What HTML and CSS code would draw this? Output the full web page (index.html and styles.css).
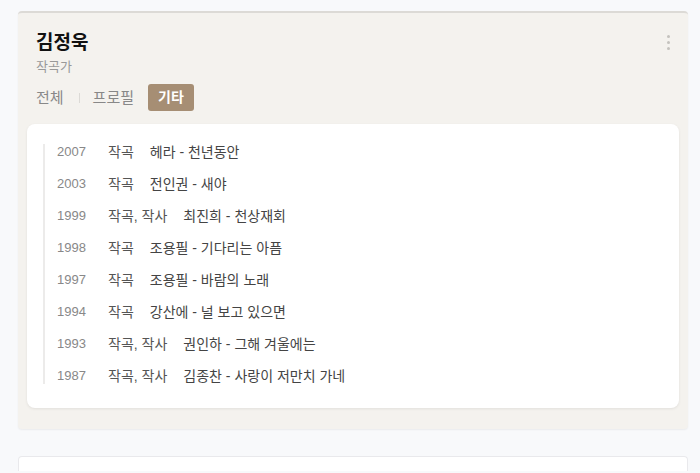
FILE: index.html
```html
<!DOCTYPE html>
<html lang="ko">
<head>
<meta charset="utf-8">
<link rel="stylesheet" href="styles.css">
</head>
<body>
<div class="page">
  <section class="card">
    <div class="head">
      <div class="info">
        <h1 class="name">김정욱</h1>
        <div class="job">작곡가</div>
      </div>
      <div class="more"><span></span><span></span><span></span></div>
    </div>
    <nav class="tabs">
      <span class="tab">전체</span>
      <span class="sep"></span>
      <span class="tab">프로필</span>
      <span class="tab active">기타</span>
    </nav>
    <div class="panel">
      <ul class="list">
        <li><span class="year">2007</span><span class="role">작곡</span><span class="song">헤라 - 천년동안</span></li>
        <li><span class="year">2003</span><span class="role">작곡</span><span class="song">전인권 - 새야</span></li>
        <li><span class="year">1999</span><span class="role">작곡, 작사</span><span class="song">최진희 - 천상재회</span></li>
        <li><span class="year">1998</span><span class="role">작곡</span><span class="song">조용필 - 기다리는 아픔</span></li>
        <li><span class="year">1997</span><span class="role">작곡</span><span class="song">조용필 - 바람의 노래</span></li>
        <li><span class="year">1994</span><span class="role">작곡</span><span class="song">강산에 - 널 보고 있으면</span></li>
        <li><span class="year">1993</span><span class="role">작곡, 작사</span><span class="song">권인하 - 그해 겨울에는</span></li>
        <li><span class="year">1987</span><span class="role">작곡, 작사</span><span class="song">김종찬 - 사랑이 저만치 가네</span></li>
      </ul>
    </div>
  </section>
  <section class="card2"></section>
</div>
</body>
</html>
```
FILE: styles.css
```css
html, body {
  margin: 0;
  padding: 0;
  background: #f8f9fb;
  font-family: "Liberation Sans", "Noto Sans CJK KR", sans-serif;
}
.page {
  width: 670px;
  padding: 11px 0 0 18px;
}
.card {
  background: #f4f2ee;
  border-top: 2px solid #dcdad6;
  border-radius: 4px;
  padding: 18px 9px 21px 9px;
  box-shadow: 0 1px 2px rgba(0,0,0,0.06);
}
.head {
  display: flex;
  justify-content: space-between;
  align-items: flex-start;
  padding: 0 9px;
}
.name {
  margin: 0;
  font-size: 19px;
  line-height: 24px;
  font-weight: 700;
  color: #111;
}
.job {
  margin-top: 3px;
  font-size: 13px;
  line-height: 18px;
  color: #999;
}
.more {
  display: flex;
  flex-direction: column;
  gap: 3px;
  padding: 4px 0 0 0;
}
.more span {
  width: 3px;
  height: 3px;
  border-radius: 50%;
  background: #c4c2be;
}
.tabs {
  display: flex;
  align-items: center;
  margin-top: 8px;
  padding: 0 9px;
}
.tab {
  font-size: 15px;
  line-height: 17px;
  color: #888;
}
.sep {
  width: 1px;
  height: 10px;
  background: #dcdad6;
  margin: 0 13px 0 15px;
}
.tab.active {
  margin-left: 14px;
  padding: 5px 10px;
  font-size: 14px;
  background: #a68e74;
  color: #fff;
  font-weight: 700;
  border-radius: 3px;
}
.panel {
  margin-top: 13px;
  background: #fff;
  border-radius: 8px;
  padding: 20px 16px 24px 16px;
  box-shadow: 0 1px 3px rgba(0,0,0,0.08);
}
.list {
  list-style: none;
  margin: 0;
  padding: 0 0 0 12px;
  border-left: 2px solid #ecebea;
  display: flex;
  flex-direction: column;
  gap: 16px;
}
.list li {
  display: flex;
  align-items: center;
  line-height: 16px;
  height: 16px;
}
.year {
  width: 51px;
  font-size: 13px;
  color: #888;
}
.role {
  font-size: 14px;
  color: #555;
  margin-right: 16px;
}
.song {
  font-size: 14px;
  color: #444;
}
.card2 {
  margin-top: 27px;
  height: 14px;
  background: #fff;
  border: 1px solid #e9e9ec;
  border-bottom: 0;
  border-radius: 4px 4px 0 0;
}
```
